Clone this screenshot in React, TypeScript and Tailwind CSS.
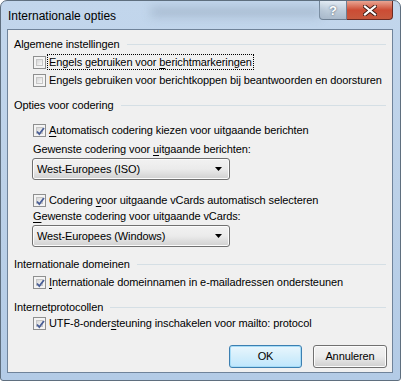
import React from "react";

const font = { fontFamily: '"Liberation Sans", Arial, sans-serif' };

function Box({ checked }: { checked?: boolean }) {
  return (
    <div className="relative w-[13px] h-[13px] shrink-0 border border-[#8e8f8f] bg-[#f4f4f4] p-[2px]">
      <div className="w-full h-full border border-[#c6c6c6] bg-gradient-to-br from-[#d6d6d6] to-[#fafafa]" />
      {checked && (
        <svg className="absolute left-[1px] top-[1px]" width="11" height="11" viewBox="0 0 11 11">
          <path d="M2 5.5 L4.3 8 L9 2" fill="none" stroke="#4a5f97" strokeWidth="1.8" strokeLinejoin="miter" />
        </svg>
      )}
    </div>
  );
}

function U({ children }: { children: React.ReactNode }) {
  return <span className="underline underline-offset-2 decoration-1">{children}</span>;
}

function Check({ checked, children, focus, mt }: { checked?: boolean; children: React.ReactNode; focus?: boolean; mt: string }) {
  return (
    <div className={`flex items-center h-[18px] pl-[25px] whitespace-nowrap ${mt}`}>
      <Box checked={checked} />
      <span className={`ml-[2px] px-[1px] leading-[14px] ${focus ? "outline outline-1 outline-dotted outline-black" : ""}`}>{children}</span>
    </div>
  );
}

function Header({ children, mt }: { children: React.ReactNode; mt: string }) {
  return (
    <div className={`flex items-center h-[18px] pl-[6px] pr-[6px] ${mt}`}>
      <span className="whitespace-nowrap">{children}</span>
      <div className="flex-1 ml-[7px] h-px bg-[#d5dfe5]" />
    </div>
  );
}

function Combo({ value, mt }: { value: string; mt: string }) {
  return (
    <div className={`ml-[24px] w-[198px] h-[22px] ${mt} rounded-[3px] border border-[#707070] bg-gradient-to-b from-[#f2f2f2] via-[#ebebeb] to-[#d0d0d0] flex items-center pl-[4px] pr-[7px] shadow-[inset_0_0_0_1px_#fcfcfc]`}>
      <span className="flex-1 whitespace-nowrap">{value}</span>
      <svg width="7" height="4" viewBox="0 0 7 4"><path d="M0 0 H7 L3.5 4 Z" fill="#000" /></svg>
    </div>
  );
}

export default function App() {
  return (
    <div className="w-[401px] h-[381px] bg-white" style={font}>
      <div className="w-[401px] h-[381px] rounded-t-[7px] rounded-b-[3px] border border-[#5f6f7f] bg-gradient-to-b from-[#c2d6ec] via-[#bcd1e8] to-[#b3cbe6] flex flex-col overflow-hidden text-[11px] tracking-[-0.1px] text-black">
        {/* title bar */}
        <div className="relative h-[28px] flex items-start shrink-0">
          <div className="absolute left-[150px] top-[6px] w-[170px] h-[10px] bg-[#9fb2c7] blur-[5px] opacity-70" />
          <span className="relative pl-[7px] pt-[7px] text-[12px] tracking-normal leading-[16px]">Internationale opties</span>
          <div className="ml-auto mr-[7px] flex">
            <div className="w-[28px] h-[19px] border border-[#6d7f93] border-t-0 rounded-bl-[4px] bg-gradient-to-b from-[#e2ebf4] via-[#c0cedc] to-[#aabacb] flex items-center justify-center text-white font-bold text-[13px] leading-none [text-shadow:0_0_2px_#3a4a5c]">?</div>
            <div className="w-[46px] h-[19px] border border-[#6b2a22] border-t-0 border-l-0 rounded-br-[4px] bg-gradient-to-b from-[#e8a493] via-[#cc4c34] to-[#c7593e] flex items-center justify-center">
              <svg width="14" height="11" viewBox="0 0 14 11">
                <path d="M2 1.5 L12 9.5 M12 1.5 L2 9.5" stroke="#3b1a14" strokeWidth="4" strokeLinecap="square" />
                <path d="M2 1.5 L12 9.5 M12 1.5 L2 9.5" stroke="#ffffff" strokeWidth="2.2" strokeLinecap="square" />
              </svg>
            </div>
          </div>
        </div>
        {/* body */}
        <div className="flex-1 flex px-[6px] pb-[7px] pr-[7px]">
          <div className="flex-1 border border-[#6f839a] bg-[#f0f0f0] flex flex-col">
            <Header mt="mt-[5px]">Algemene instellingen</Header>
            <Check focus mt="mt-0">
              Engels gebruiken voor <U>b</U>erichtmarkeringen
            </Check>
            <Check mt="mt-0">
              Engels gebruiken voor berichtkoppen bij beantwoorden en doorsturen
            </Check>
            <Header mt="mt-[7px]">Opties voor codering</Header>
            <Check checked mt="mt-[7px]">
              <U>A</U>utomatisch codering kiezen voor uitgaande berichten
            </Check>
            <div className="h-[18px] mt-[1px] pl-[25px] flex items-center whitespace-nowrap">
              <span>Gewenste codering voor <U>u</U>itgaande berichten:</span>
            </div>
            <Combo value="West-Europees (ISO)" mt="mt-0" />
            <Check checked mt="mt-[11px]">
              Codering <U>v</U>oor uitgaande vCards automatisch selecteren
            </Check>
            <div className="h-[16px] mt-[-1px] pl-[25px] flex items-center whitespace-nowrap">
              <span><U>G</U>ewenste codering voor uitgaande vCards:</span>
            </div>
            <Combo value="West-Europees (Windows)" mt="mt-[1px]" />
            <Header mt="mt-[8px]">Internationale domeinen</Header>
            <Check checked mt="mt-0">
              <U>I</U>nternationale domeinnamen in e-mailadressen ondersteunen
            </Check>
            <Header mt="mt-[7px]">Internetprotocollen</Header>
            <Check checked mt="mt-[-2px]">
              UTF-8-onder<U>s</U>teuning inschakelen voor mailto: protocol
            </Check>
            <div className="flex justify-end gap-[11px] pr-[5px] mt-[13px]">
              <div className="w-[73px] h-[23px] rounded-[3px] border border-[#3c7fb1] bg-gradient-to-b from-[#e9f6fd] via-[#d4eefb] to-[#bee6fd] shadow-[inset_0_0_0_1px_#a6dcf7] flex items-center justify-center">OK</div>
              <div className="w-[74px] h-[23px] rounded-[3px] border border-[#707070] bg-gradient-to-b from-[#f2f2f2] via-[#ebebeb] to-[#cfcfcf] shadow-[inset_0_0_0_1px_#fcfcfc] flex items-center justify-center">Annuleren</div>
            </div>
          </div>
        </div>
      </div>
    </div>
  );
}
